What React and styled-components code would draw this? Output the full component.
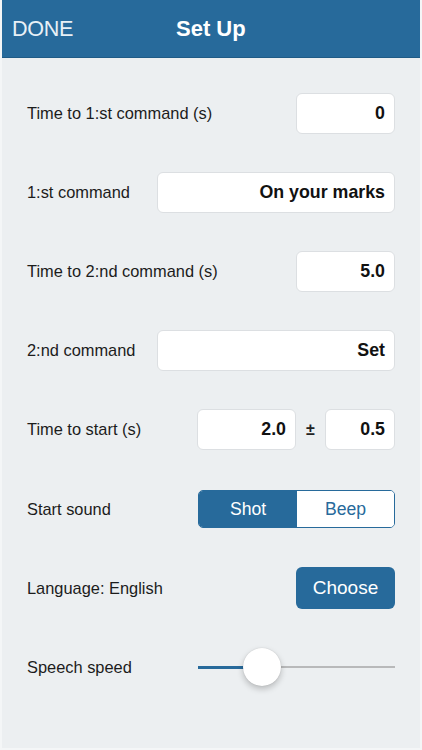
import React from "react";
import styled, { createGlobalStyle } from "styled-components";

const BLUE = "#276a9b";

const Global = createGlobalStyle`
  html, body { margin: 0; padding: 0; background: #eceff1; }
  body { font-family: "Liberation Sans", Arial, sans-serif; -webkit-font-smoothing: antialiased; }
  * { box-sizing: border-box; }
`;

const Screen = styled.div`
  width: 422px;
  height: 750px;
  background: #eceff1;
  border: 2px solid #f4f6f7;
  border-top: none;
  display: flex;
  flex-direction: column;
  overflow: hidden;
`;

const Header = styled.header`
  height: 58px;
  margin: 0 -2px;
  background: ${BLUE};
  border-bottom: 1px solid #1f5b86;
  display: grid;
  grid-template-columns: 164px 1fr;
  align-items: center;
  color: #fff;
`;

const DoneButton = styled.span`
  padding-left: 12px;
  font-size: 21.6px;
  color: #e8f0f6;
  letter-spacing: -0.3px;
`;

const Title = styled.h1`
  margin: 0;
  padding-left: 12px;
  font-size: 22px;
  font-weight: 700;
  color: #fff;
`;

const Content = styled.main`
  padding: 15.5px 25px 0 25px;
  display: flex;
  flex-direction: column;
`;

const Row = styled.div`
  height: 79.2px;
  display: flex;
  align-items: center;
  justify-content: space-between;
`;

const Label = styled.span`
  font-size: 16.4px;
  color: #1c1c1c;
`;

const Field = styled.div`
  width: ${(p) => p.$w}px;
  height: 41px;
  background: #fff;
  border: 1px solid #dcdfe2;
  border-radius: 6px;
  display: flex;
  align-items: center;
  justify-content: flex-end;
  padding-right: 9px;
  font-size: 17.8px;
  font-weight: 700;
  color: #111;
`;

const Pair = styled.div`
  display: flex;
  align-items: center;
`;

const PlusMinus = styled.span`
  width: 29px;
  text-align: center;
  font-size: 16px;
  font-weight: 700;
  color: #222;
`;

const Segmented = styled.div`
  width: 197px;
  height: 38px;
  border: 1px solid ${BLUE};
  border-radius: 5px;
  display: grid;
  grid-template-columns: 98px 1fr;
  overflow: hidden;
`;

const Segment = styled.div`
  display: flex;
  align-items: center;
  justify-content: center;
  font-size: 17.6px;
  background: ${(p) => (p.$active ? BLUE : "#fff")};
  color: ${(p) => (p.$active ? "#fff" : BLUE)};
`;

const ChooseButton = styled.button`
  width: 99px;
  height: 42px;
  border: none;
  border-radius: 6px;
  background: ${BLUE};
  color: #fff;
  font-family: inherit;
  font-size: 19px;
  padding: 0;
`;

const Slider = styled.div`
  position: relative;
  width: 197px;
  height: 40px;
  display: flex;
  align-items: center;
`;

const TrackFill = styled.div`
  width: 46px;
  height: 3px;
  background: ${BLUE};
`;

const TrackRest = styled.div`
  flex: 1;
  height: 2px;
  background: #b8b9ba;
`;

const Thumb = styled.div`
  position: absolute;
  left: 45px;
  top: 1px;
  width: 38px;
  height: 38px;
  border-radius: 50%;
  background: #fff;
  box-shadow: 0 3px 6px rgba(0, 0, 0, 0.22), 0 0 1px rgba(0, 0, 0, 0.2);
`;

export default function App() {
  return (
    <>
      <Global />
      <Screen>
        <Header>
          <DoneButton>DONE</DoneButton>
          <Title>Set Up</Title>
        </Header>
        <Content>
          <Row>
            <Label>Time to 1:st command (s)</Label>
            <Field $w={99}>0</Field>
          </Row>
          <Row>
            <Label>1:st command</Label>
            <Field $w={238}>On your marks</Field>
          </Row>
          <Row>
            <Label>Time to 2:nd command (s)</Label>
            <Field $w={99}>5.0</Field>
          </Row>
          <Row>
            <Label>2:nd command</Label>
            <Field $w={238}>Set</Field>
          </Row>
          <Row>
            <Label>Time to start (s)</Label>
            <Pair>
              <Field $w={99}>2.0</Field>
              <PlusMinus>±</PlusMinus>
              <Field $w={70}>0.5</Field>
            </Pair>
          </Row>
          <Row>
            <Label>Start sound</Label>
            <Segmented>
              <Segment $active>Shot</Segment>
              <Segment>Beep</Segment>
            </Segmented>
          </Row>
          <Row>
            <Label>Language: English</Label>
            <ChooseButton>Choose</ChooseButton>
          </Row>
          <Row>
            <Label>Speech speed</Label>
            <Slider>
              <TrackFill />
              <TrackRest />
              <Thumb />
            </Slider>
          </Row>
        </Content>
      </Screen>
    </>
  );
}
